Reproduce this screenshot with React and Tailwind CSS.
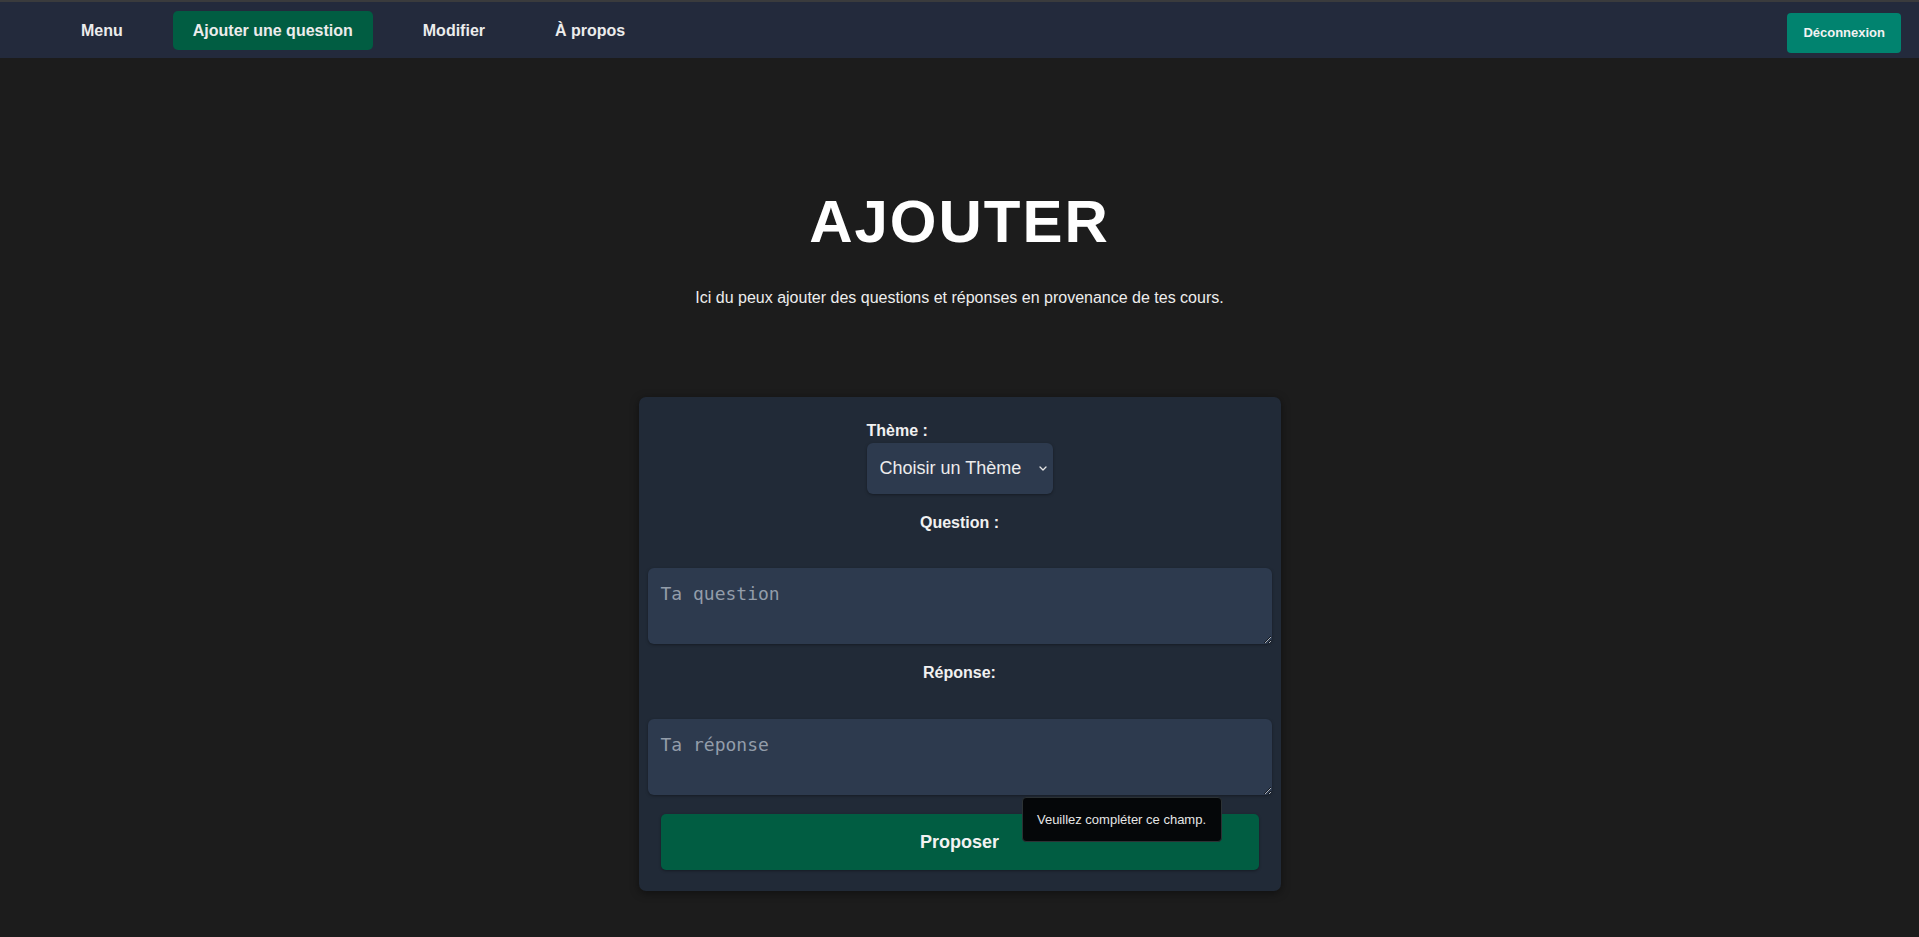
import React, { useState } from "react";

function App() {
  const [theme, setTheme] = useState("");
  const [question, setQuestion] = useState("");
  const [reponse, setReponse] = useState("");

  const navItems = ["Menu", "Ajouter une question", "Modifier", "À propos"];
  const active = "Ajouter une question";

  return (
    <div className="min-h-screen bg-[#1c1c1c] font-['Liberation_Sans',Arial,sans-serif] text-white">
      <nav className="h-[58px] border-t-2 border-[#3a3b3d] bg-[#232a3c] flex items-center justify-between pl-[61px] pr-[18px]">
        <ul className="flex items-center gap-[30px]">
          {navItems.map((item) => (
            <li key={item}>
              <a
                href="#"
                className={`block rounded-[5px] px-5 py-2 text-base leading-[23px] font-bold text-[#ececec] ${
                  item === active ? "bg-[#015d42]" : ""
                }`}
              >
                {item}
              </a>
            </li>
          ))}
        </ul>
        <button
          type="button"
          className="mt-[5px] h-10 rounded-[4px] bg-[#01836f] px-4 text-[13px] font-bold text-[#f2f2f2]"
        >
          Déconnexion
        </button>
      </nav>

      <main className="flex flex-col items-center pt-[129px]">
        <h1 className="text-[60px] leading-[70px] font-bold tracking-[2px] text-white">
          AJOUTER
        </h1>
        <p className="mt-[29px] text-base leading-6 text-[#ededed]">
          Ici du peux ajouter des questions et réponses en provenance de tes cours.
        </p>

        <form
          className="relative mt-[87px] flex w-[642px] flex-col rounded-[7px] bg-[#212a37] px-[9px] pt-[22px] pb-[21px] shadow-[0_2px_10px_rgba(0,0,0,0.45)]"
          onSubmit={(e) => e.preventDefault()}
        >
          <div className="flex justify-center">
            <div className="flex flex-col">
              <label className="text-base leading-6 font-bold text-[#f1f1f1]">Thème :</label>
              <div className="relative">
                <select
                  value={theme}
                  onChange={(e) => setTheme(e.target.value)}
                  className="h-[51px] w-[186px] appearance-none rounded-[6px] bg-[#2d3a4e] pl-[13px] text-[18px] text-[#ececec] shadow-[0_1px_3px_rgba(0,0,0,0.35)] outline-none"
                >
                  <option value="">Choisir un Thème</option>
                  <option value="maths">Mathématiques</option>
                  <option value="histoire">Histoire</option>
                </select>
                <svg
                  className="pointer-events-none absolute left-[172px] top-[23px]"
                  width="8"
                  height="5"
                  viewBox="0 0 8 5"
                  fill="none"
                >
                  <path d="M1 1l3 3 3-3" stroke="#e6e6e6" strokeWidth="1.3" strokeLinecap="round" strokeLinejoin="round" />
                </svg>
              </div>
            </div>
          </div>

          <label className="mt-[17px] text-center text-base leading-6 font-bold text-[#f1f1f1]">
            Question :
          </label>
          <textarea
            value={question}
            onChange={(e) => setQuestion(e.target.value)}
            placeholder="Ta question"
            className="mt-[33px] h-[76px] w-full rounded-[6px] bg-[#2d3a4e] px-[13px] pt-[15px] pb-[10px] font-['DejaVu_Sans_Mono',monospace] text-[18px] leading-[21px] text-[#ececec] shadow-[0_1px_3px_rgba(0,0,0,0.35)] outline-none placeholder:text-[#939daa]"
          />

          <label className="mt-[17px] text-center text-base leading-6 font-bold text-[#f1f1f1]">
            Réponse:
          </label>
          <textarea
            value={reponse}
            onChange={(e) => setReponse(e.target.value)}
            placeholder="Ta réponse"
            className="mt-[34px] h-[76px] w-full rounded-[6px] bg-[#2d3a4e] px-[13px] pt-[15px] pb-[10px] font-['DejaVu_Sans_Mono',monospace] text-[18px] leading-[21px] text-[#ececec] shadow-[0_1px_3px_rgba(0,0,0,0.35)] outline-none placeholder:text-[#939daa]"
          />

          <button
            type="submit"
            className="mx-[13px] mt-[19px] h-[56px] rounded-[5px] bg-[#015d42] text-[18px] font-bold text-[#f2f2f2] shadow-[0_1px_3px_rgba(0,0,0,0.35)]"
          >
            Proposer
          </button>

          {/* bulle de validation du navigateur */}
          <div className="absolute left-[383px] top-[400px] flex h-[45px] w-[200px] items-center justify-center rounded-[4px] border border-[#2c3235] bg-[#050709] text-[13px] text-[#e6e6e6]">
            Veuillez compléter ce champ.
          </div>
        </form>
      </main>
    </div>
  );
}

export default App;
